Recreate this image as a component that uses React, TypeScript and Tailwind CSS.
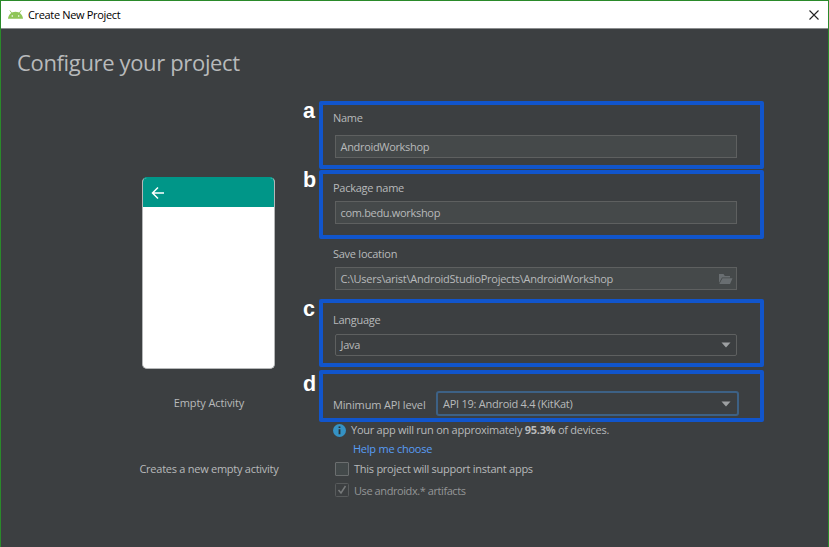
import type { ReactNode } from "react";

function Caret() {
  return (
    <svg className="mr-[5px] shrink-0" width="10" height="6" viewBox="0 0 10 6">
      <path d="M.5.5h9L5 5.500z" fill="#9da0a2" />
    </svg>
  );
}

function Marked({ tag, tagTop, className, children }: { tag: string; tagTop: string; className: string; children: ReactNode }) {
  return (
    <section className={`relative w-[445px] rounded-[2px] border-4 border-[#1155cc] ${className}`}>
      <span className={`absolute -left-[20px] font-['Liberation_Sans',sans-serif] text-[21.5px] leading-[24px] font-bold tracking-normal text-white ${tagTop}`}>
        {tag}
      </span>
      {children}
    </section>
  );
}

function Label({ className, children }: { className: string; children: ReactNode }) {
  return <div className={`ml-[10px] h-4 leading-4 ${className}`}>{children}</div>;
}

function Field({ className, children }: { className: string; children: ReactNode }) {
  return (
    <div className={`ml-[12px] flex w-[402px] items-center justify-between border border-[#5e6060] pl-[4.5px] ${className}`}>
      {children}
    </div>
  );
}

export default function App() {
  return (
    <div className="flex h-[547px] w-[829px] flex-col border-x border-t border-[#2a8a2a] bg-[#3c3f41] font-['Open_Sans','Noto_Sans',sans-serif] text-[11px] tracking-[-0.26px] whitespace-nowrap text-[#b8babb]">
      <header className="flex h-7 shrink-0 items-center border-b border-[#8b8d8e] bg-white text-black">
        <svg className="ml-[7px]" width="15" height="10" viewBox="0 0 15 10">
          <path d="M0 8.800C.4 4.600 3.400 1.800 7.500 1.800S14.600 4.600 15 8.800z" fill="#8fc557" />
          <path d="M1.800.4l2.200 3M13.200.4l-2.200 3" stroke="#8fc557" strokeWidth=".9" />
          <circle cx="4.300" cy="6" r=".8" fill="#fff" />
          <circle cx="10.700" cy="6" r=".8" fill="#fff" />
        </svg>
        <span className="mt-px ml-[5px] tracking-[-0.34px]">Create New Project</span>
        <svg className="mr-[9px] ml-auto" width="10" height="10" viewBox="0 0 10 10">
          <path d="M.5.5l9 9M9.500.5l-9 9" stroke="#222" strokeWidth="1.1" />
        </svg>
      </header>
      <div className="flex flex-1">
        <aside className="flex w-[318px] shrink-0 flex-col">
          <h1 className="mt-[17px] ml-4 h-8 text-[22px] leading-8 tracking-[-0.35px]">Configure your project</h1>
          <div className="mt-[99px] ml-[141px] h-[192px] w-[133px] overflow-hidden rounded-[5px] border border-[#b5b7b8] border-t-[#009688] bg-white">
            <div className="-mx-px flex h-[29px] items-center bg-[#009688] pl-[9px]">
              <svg width="14" height="14" viewBox="0 0 14 14" fill="none" stroke="#fff" strokeWidth="1.5">
                <path d="M13 7H2M7 1.500L1.500 7 7 12.500" />
              </svg>
            </div>
          </div>
          <div className="mt-[26px] ml-[108px] h-4 w-[200px] text-center leading-4 tracking-[-0.1px]">Empty Activity</div>
          <div className="mt-[50px] ml-[108px] h-4 w-[200px] text-center leading-4">Creates a new empty activity</div>
        </aside>
        <main className="flex flex-col pt-[72px]">
          <Marked tag="a" tagTop="-top-[6px]" className="h-[68px]">
            <Label className="mt-[5px]">Name</Label>
            <Field className="mt-[9px] h-[23px] bg-[#45494a] pt-[2px] tracking-[-0.32px]">AndroidWorkshop</Field>
          </Marked>
          <Marked tag="b" tagTop="-top-[6px]" className="mt-px h-[69px]">
            <Label className="mt-[6px]">Package name</Label>
            <Field className="mt-[5px] h-[23px] bg-[#45494a] pt-[2px] tracking-[-0.32px]">com.bedu.workshop</Field>
          </Marked>
          <section className="ml-[4px] h-[60px] pt-[7px]">
            <Label className="">Save location</Label>
            <Field className="mt-[5px] h-[23px] bg-[#45494a]">
              <span className="pt-[2px]">C:\Users\arist\AndroidStudioProjects\AndroidWorkshop</span>
              <svg className="mr-[3px]" width="15" height="12" viewBox="0 0 15 12" fill="#696e71">
                <path d="M1 10V1h4.500l1.300 2H12v1.500H4z" />
                <path d="M4.500 5.300H14.500L12 11H1.300z" />
              </svg>
            </Field>
          </section>
          <Marked tag="c" tagTop="-top-[6px]" className="h-[68px]">
            <Label className="mt-[9px]">Language</Label>
            <Field className="mt-[6px] h-[22px] rounded-[2px]">
              Java
              <Caret />
            </Field>
          </Marked>
          <Marked tag="d" tagTop="-top-[2px]" className="mt-[3px] flex h-[52px]">
            <Label className="mt-[23px] w-[92px] tracking-[-0.15px]">Minimum API level</Label>
            <div className="mt-[17px] ml-[11px] flex h-[25px] w-[303px] items-center justify-between rounded-[3px] border-2 border-[#3d6185] pl-[5px]">
              <span className="pt-px">API 19: Android 4.4 (KitKat)</span>
              <span className="mr-px flex">
                <Caret />
              </span>
            </div>
          </Marked>
          <div className="ml-[14px] flex h-[17px] items-center">
            <svg width="13" height="13" viewBox="0 0 13 13">
              <circle cx="6.500" cy="6.500" r="6.500" fill="#3592c4" />
              <path d="M5.600 2.500h1.800v1.600H5.600zM5.600 5.200h1.800v5H5.600z" fill="#2b2f31" />
            </svg>
            <span className="ml-[5px]">
              Your app will run on approximately <b>95.3%</b> of devices.
            </span>
          </div>
          <a className="mt-[2px] ml-[34px] h-4 leading-4 tracking-[-0.24px] text-[#589df6]">Help me choose</a>
          <div className="mt-[4px] ml-[16px] flex h-4 items-center">
            <span className="h-[14px] w-[14px] rounded-[1px] border border-[#6b6e6f] bg-[#43494a]" />
            <span className="ml-[5px]">This project will support instant apps</span>
          </div>
          <div className="mt-[5px] ml-[16px] flex h-4 items-center tracking-[-0.42px] text-[#949697]">
            <svg width="14" height="14" viewBox="0 0 14 14" fill="none">
              <rect x=".5" y=".5" width="13" height="13" rx="1" stroke="#585b5c" />
              <path d="M3.500 7l2.500 3 4.500-7" stroke="#777a7b" strokeWidth="1.500" />
            </svg>
            <span className="mt-[2px] ml-[5px]">Use androidx.* artifacts</span>
          </div>
        </main>
      </div>
    </div>
  );
}
